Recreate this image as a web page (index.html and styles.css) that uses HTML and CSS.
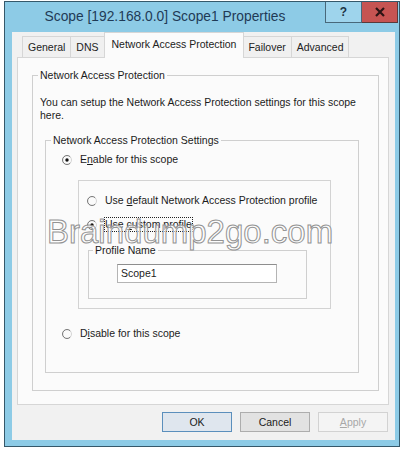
FILE: index.html
```html
<!DOCTYPE html>
<html lang="en">
<head>
  <meta charset="UTF-8">
  <title>Scope Properties</title>
  <link rel="stylesheet" href="styles.css">
</head>
<body>
  <div class="window">
    <div class="titlebar">
      <div class="title">Scope [192.168.0.0] Scope1 Properties</div>
      <div class="caption-btn help">?</div>
      <div class="caption-btn close">
        <svg width="12" height="10" viewBox="0 0 12 10"><path d="M2 1 L10 9 M10 1 L2 9" stroke="#2a1414" stroke-width="2.2"/></svg>
      </div>
    </div>

    <div class="client">
      <div class="tabs">
        <div class="tab">General</div>
        <div class="tab">DNS</div>
        <div class="tab selected">Network Access Protection</div>
        <div class="tab">Failover</div>
        <div class="tab">Advanced</div>
      </div>

      <div class="panel">
        <fieldset class="group outer">
          <legend>Network Access Protection</legend>
          <p class="intro">You can setup the Network Access Protection settings for this scope here.</p>

          <fieldset class="group settings">
            <legend>Network Access Protection Settings</legend>
            <div class="radio-row enable">
              <svg class="radio" width="10" height="10" viewBox="0 0 10 10"><circle cx="5" cy="5" r="4.5" fill="none" stroke="#d4d4d4"/><path d="M8.2 1.8 A4.5 4.5 0 1 0 8.2 8.2" fill="none" stroke="#7a7a7a"/><circle cx="5" cy="5" r="1.7" fill="#111"/></svg>
              <span>E<u>n</u>able for this scope</span>
            </div>

            <div class="subbox">
              <div class="radio-row">
                <svg class="radio" width="10" height="10" viewBox="0 0 10 10"><circle cx="5" cy="5" r="4.5" fill="none" stroke="#d4d4d4"/><path d="M8.2 1.8 A4.5 4.5 0 1 0 8.2 8.2" fill="none" stroke="#7a7a7a"/></svg>
                <span>Use <u>d</u>efault Network Access Protection profile</span>
              </div>
              <div class="radio-row custom">
                <svg class="radio" width="10" height="10" viewBox="0 0 10 10"><circle cx="5" cy="5" r="4.5" fill="none" stroke="#d4d4d4"/><path d="M8.2 1.8 A4.5 4.5 0 1 0 8.2 8.2" fill="none" stroke="#7a7a7a"/><circle cx="5" cy="5" r="1.7" fill="#111"/></svg>
                <span class="focused">Use <u>c</u>ustom profile</span>
              </div>
              <fieldset class="group profile">
                <legend>Profile Name</legend>
                <div class="textbox">Scope1</div>
              </fieldset>
            </div>

            <div class="radio-row disable">
              <svg class="radio" width="10" height="10" viewBox="0 0 10 10"><circle cx="5" cy="5" r="4.5" fill="none" stroke="#d4d4d4"/><path d="M8.2 1.8 A4.5 4.5 0 1 0 8.2 8.2" fill="none" stroke="#7a7a7a"/></svg>
              <span>D<u>i</u>sable for this scope</span>
            </div>
          </fieldset>
        </fieldset>
      </div>

      <div class="buttons">
        <div class="btn default">OK</div>
        <div class="btn">Cancel</div>
        <div class="btn disabled"><u>A</u>pply</div>
      </div>
    </div>
  </div>

  <div class="watermark">Braindump2go.com</div>
</body>
</html>
```

FILE: styles.css
```css
body {
  margin: 0;
  background: #fff;
  font-family: "Liberation Sans", Arial, sans-serif;
  font-size: 10.5px;
  color: #1c1c1c;
}
.window {
  margin: 1px 0 0 4px;
  width: 394px;
  background: #8dcbe6;
  border: 1px solid #35586a;
}
.titlebar { display: flex; height: 30px; }
.title {
  flex: 1;
  text-align: center;
  line-height: 30px;
  font-size: 13.8px;
  color: #1f3a56;
}
.caption-btn {
  width: 35px;
  height: 20px;
  display: flex;
  align-items: center;
  justify-content: center;
}
.help {
  background: #9ed4ec;
  border: 1px solid #48687a;
  border-top: none;
  font-weight: bold;
  font-size: 12px;
  color: #1d3446;
}
.close {
  background: #c65452;
  border: 1px solid #5a3a3a;
  border-top: none;
  border-left: none;
  margin-right: 1px;
}
.client {
  margin: 0 4px 6px 7px;
  padding: 1px 6px 8px 5px;
  background: #f1f1f1;
}
.tabs {
  display: flex;
  align-items: flex-end;
  height: 24px;
  padding-left: 5px;
}
.tab {
  height: 20px;
  line-height: 20px;
  padding: 0 5px;
  border: 1px solid #d6d6d6;
  border-bottom: none;
  margin-left: -1px;
  background: #f0f0f0;
  color: #222;
}
.tab:first-child { margin-left: 0; }
.tab.selected {
  position: relative;
  z-index: 1;
  height: 25px;
  line-height: 22px;
  padding: 0 7px;
  margin: 0 -1px -1px -1px;
  background: #fbfbfb;
}
.panel {
  height: 346px;
  border: 1px solid #d6d6d6;
  background: #fbfbfb;
}
.group {
  margin: 0;
  padding: 0;
  border: 1px solid #cfcfcf;
  min-width: 0;
}
.group legend {
  margin-left: 5px;
  padding: 0 2px;
  line-height: 13px;
}
.outer {
  margin: 11px 0 0 14px;
  width: 345px;
  padding-bottom: 17px;
}
.intro {
  margin: 14px 10px 0 7px;
  line-height: 13px;
}
.settings {
  margin: 12px 0 0 12px;
  width: 312px;
  padding-bottom: 32px;
}
.radio-row {
  display: flex;
  align-items: center;
  gap: 8px;
  height: 13px;
  line-height: 13px;
}
.radio { flex: none; }
.enable { margin: 6px 0 0 16px; }
.disable { margin: 18px 0 0 16px; }
.subbox {
  margin: 14px 0 0 32px;
  width: 243px;
  border: 1px solid #d3d3d3;
  padding: 13px 0 9px 8px;
}
.subbox .radio-row + .radio-row { margin-top: 11px; }
.focused { outline: 1px dotted #222; }
.profile {
  margin: 13px 0 0 1px;
  width: 219px;
  padding: 7px 0 15px 0;
  box-sizing: border-box;
}
.profile legend { margin-left: 4px; }
.textbox {
  margin-left: 28px;
  width: 160px;
  height: 19px;
  line-height: 17px;
  padding-left: 3px;
  box-sizing: border-box;
  border: 1px solid #b4b4b4;
  border-top-color: #8e8e8e;
  background: #fff;
}
.buttons {
  display: flex;
  justify-content: flex-end;
  gap: 8px;
  margin-top: 7px;
  padding-right: 1px;
}
.btn {
  width: 68px;
  height: 18px;
  line-height: 18px;
  text-align: center;
  border: 1px solid #adadad;
  background: #e2e2e2;
  color: #1a1a1a;
}
.btn.default {
  border-color: #5b8fbc;
  background: #dfe6ee;
}
.btn.disabled {
  border-color: #d2d2d2;
  background: #f4f4f4;
  color: #a8a8a8;
}
.watermark {
  position: absolute;
  left: 47px;
  top: 215px;
  font-size: 33px;
  line-height: 1;
  color: rgba(255, 255, 255, 0.65);
  -webkit-text-stroke: 1px #939393;
  pointer-events: none;
}
```
